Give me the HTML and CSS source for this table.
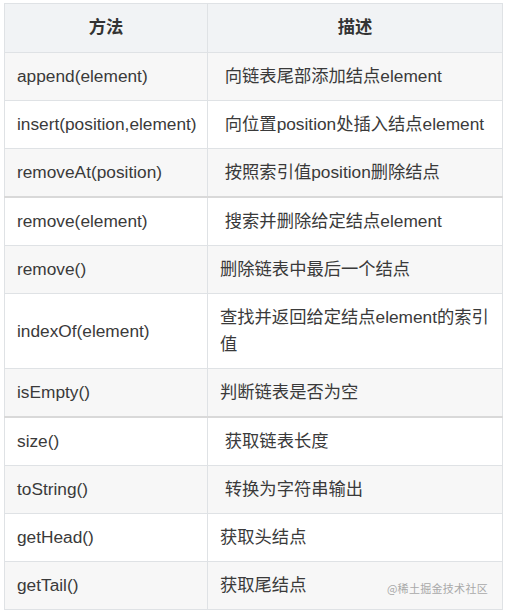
FILE: index.html
```html
<!DOCTYPE html>
<html lang="zh-CN">
<head>
<meta charset="utf-8">
<title>链表方法</title>
<link rel="stylesheet" href="styles.css">
</head>
<body>
<div class="wrap">
  <table class="api">
    <colgroup><col class="c1"><col class="c2"></colgroup>
    <thead>
      <tr><th>方法</th><th>描述</th></tr>
    </thead>
    <tbody>
      <tr><td>append(element)</td><td>&nbsp;向链表尾部添加结点element</td></tr>
      <tr><td>insert(position,element)</td><td>&nbsp;向位置position处插入结点element</td></tr>
      <tr class="seam"><td>removeAt(position)</td><td>&nbsp;按照索引值position删除结点</td></tr>
      <tr><td>remove(element)</td><td>&nbsp;搜索并删除给定结点element</td></tr>
      <tr><td>remove()</td><td>删除链表中最后一个结点</td></tr>
      <tr><td>indexOf(element)</td><td>查找并返回给定结点element的索引值</td></tr>
      <tr class="seam"><td>isEmpty()</td><td>判断链表是否为空</td></tr>
      <tr><td>size()</td><td>&nbsp;获取链表长度</td></tr>
      <tr><td>toString()</td><td>&nbsp;转换为字符串输出</td></tr>
      <tr><td>getHead()</td><td>获取头结点</td></tr>
      <tr><td>getTail()</td><td>获取尾结点</td></tr>
    </tbody>
  </table>
  <div class="mark">@稀土掘金技术社区</div>
</div>
</body>
</html>
```

FILE: styles.css
```css
html, body {
  margin: 0;
  padding: 0;
  background: #ffffff;
}
body {
  padding: 3px 3px 0 4px;
  font-family: "Liberation Sans", "Noto Sans CJK SC", sans-serif;
  color: #3a3a3a;
}
.wrap {
  position: relative;
  width: 499px;
}
.api {
  width: 499px;
  border-collapse: collapse;
  table-layout: fixed;
  font-size: 17.3px;
  line-height: 27px;
}
.c1 { width: 203px; }
.api th, .api td {
  border: 1px solid #dfe2e5;
  padding: 10px 12px;
  text-align: left;
  vertical-align: middle;
}
.api th {
  background: #f1f3f5;
  font-weight: bold;
  text-align: center;
  padding: 10px 12px 11px;
  color: #333333;
}
.api tbody tr:nth-child(odd) {
  background: #f7f7f7;
}
.api tbody tr:nth-child(even) {
  background: #ffffff;
}
.api tr.seam td {
  border-bottom: 2px solid #d9d9d9;
}
.mark {
  position: absolute;
  right: 15px;
  bottom: 15px;
  font-size: 11px;
  line-height: 14px;
  color: #a9a9a9;
  font-family: "Noto Sans CJK SC", sans-serif;
  letter-spacing: 0.3px;
}
```
